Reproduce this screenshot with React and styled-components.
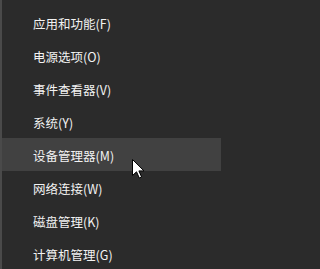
import React from "react";
import styled, { createGlobalStyle } from "styled-components";

const GlobalStyle = createGlobalStyle`
  html, body {
    margin: 0;
    padding: 0;
    background: #2b2b2b;
  }
`;

const items = [
  { label: "应用和功能", key: "F" },
  { label: "电源选项", key: "O" },
  { label: "事件查看器", key: "V" },
  { label: "系统", key: "Y" },
  { label: "设备管理器", key: "M", hover: true },
  { label: "网络连接", key: "W" },
  { label: "磁盘管理", key: "K" },
  { label: "计算机管理", key: "G" },
];

const Cursor = () => (
  <CursorIcon width="13" height="20" viewBox="0 0 13 20">
    <path
      d="M0.5 0.5 L0.5 16.5 L4.5 12.8 L7.3 19 L9.6 18 L6.9 11.9 L12 11.9 Z"
      fill="#fff"
      stroke="#000"
      strokeWidth="1"
      strokeLinejoin="miter"
    />
  </CursorIcon>
);

export default function App() {
  return (
    <>
      <GlobalStyle />
      <Menu>
        {items.map((item) => (
          <Item key={item.key} $hover={item.hover}>
            {item.label}({item.key})
            {item.hover && <Cursor />}
          </Item>
        ))}
      </Menu>
    </>
  );
}

const Menu = styled.div`
  position: relative;
  width: 221px;
  height: 269px;
  box-sizing: border-box;
  padding-top: 6px;
  background: #2b2b2b;
  border-left: 2px solid #4a4a4a;
  display: flex;
  flex-direction: column;
  overflow: hidden;
`;

const Item = styled.div`
  position: relative;
  height: 33px;
  flex-shrink: 0;
  display: flex;
  align-items: center;
  padding-left: 31px;
  padding-top: 1px;
  box-sizing: border-box;
  background: ${(p) => (p.$hover ? "#414141" : "transparent")};
  color: #f2f2f2;
  font-family: "Noto Sans CJK SC", "Liberation Sans", sans-serif;
  font-size: 12.5px;
  white-space: nowrap;
`;

const CursorIcon = styled.svg`
  position: absolute;
  left: 130px;
  top: 21px;
`;
